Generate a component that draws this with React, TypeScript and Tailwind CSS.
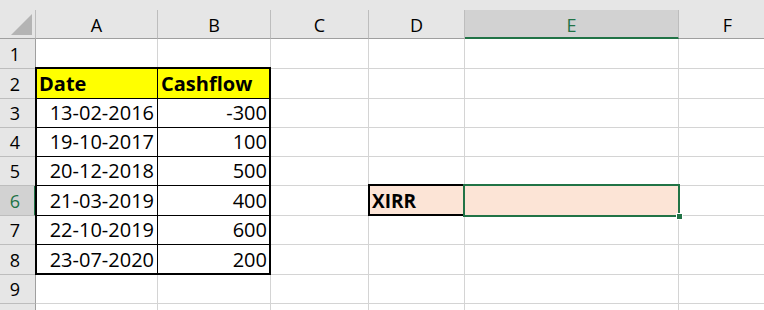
import React from "react";

const GRID =
  "grid grid-cols-[36px_122px_113px_98px_96px_214px_98px] grid-rows-[10px_29px_30px_30px_29px_29px_29px_30px_29px_30px_29px_30px]";

type Row = {
  n: number;
  a?: string;
  b?: string;
  d?: string;
};

const rows: Row[] = [
  { n: 1 },
  { n: 2, a: "Date", b: "Cashflow" },
  { n: 3, a: "13-02-2016", b: "-300" },
  { n: 4, a: "19-10-2017", b: "100" },
  { n: 5, a: "20-12-2018", b: "500" },
  { n: 6, a: "21-03-2019", b: "400", d: "XIRR" },
  { n: 7, a: "22-10-2019", b: "600" },
  { n: 8, a: "23-07-2020", b: "200" },
  { n: 9 },
  { n: 10 },
];

const letters = ["A", "B", "C", "D", "E", "F"];

export default function App() {
  return (
    <div className="w-[764px] h-[310px] overflow-hidden bg-white font-['Open_Sans',sans-serif] text-black">
      <div className="relative w-[777px]">
        <div className={GRID}>
          {/* corner */}
          <div className="row-span-2 bg-[#e6e6e6] flex flex-col">
            <div className="h-[10px]" />
            <div className="flex-1 border-r border-b border-r-[#bdbdbd] border-b-[#9f9f9f]">
              <svg width="35" height="28" viewBox="0 0 35 28" className="block">
                <polygon points="32,4 32,25 11,25" fill="#b4b4b4" />
              </svg>
            </div>
          </div>
          {letters.map((l) => (
            <div key={"s" + l} className="bg-[#e6e6e6]" />
          ))}
          {letters.map((l) =>
            l === "E" ? (
              <div
                key={l}
                className="bg-[#d2d2d2] border-r border-r-[#bdbdbd] border-b-2 border-b-[#217346] flex items-center justify-center text-[18px] leading-[18px] text-[#217346] pt-[2px]"
              >
                {l}
              </div>
            ) : (
              <div
                key={l}
                className="bg-[#e6e6e6] border-r border-b border-r-[#bdbdbd] border-b-[#9f9f9f] flex items-center justify-center text-[18px] leading-[18px] pt-[2px]"
              >
                {l}
              </div>
            )
          )}
          {rows.map((r) => {
            const inTable = r.n >= 2 && r.n <= 8;
            const innerBottom = r.n >= 2 && r.n <= 7;
            const isHead = r.n === 2;
            return (
              <React.Fragment key={r.n}>
                {r.n === 6 ? (
                  <div className="bg-[#d2d2d2] border-r-2 border-r-[#217346] border-b border-b-[#bdbdbd] flex items-center justify-center pr-[4px] text-[18px] leading-[18px] text-[#217346]">
                    {r.n}
                  </div>
                ) : (
                  <div className="bg-[#e6e6e6] border-r border-b border-r-[#9f9f9f] border-b-[#bdbdbd] flex items-center justify-center pr-[5px] text-[18px] leading-[18px]">
                    {r.n < 10 ? r.n : null}
                  </div>
                )}
                {/* A */}
                <div
                  className={
                    "border-r border-b flex items-center text-[20px] leading-[20px] " +
                    (inTable ? "border-r-black " : "border-r-[#d4d4d4] ") +
                    (innerBottom ? "border-b-black " : "border-b-[#d4d4d4] ") +
                    (isHead
                      ? "bg-[#ffff00] font-bold justify-start pl-[3px] text-[19px]"
                      : "justify-end pr-[3px]")
                  }
                >
                  {r.a}
                </div>
                {/* B */}
                <div
                  className={
                    "border-r border-b border-r-[#d4d4d4] flex items-center text-[20px] leading-[20px] " +
                    (innerBottom ? "border-b-black " : "border-b-[#d4d4d4] ") +
                    (isHead
                      ? "bg-[#ffff00] font-bold justify-start pl-[3px] text-[19px]"
                      : "justify-end pr-[3px]")
                  }
                >
                  {r.b}
                </div>
                {/* C */}
                <div className="border-r border-b border-[#d4d4d4]" />
                {/* D */}
                <div
                  className={
                    "border-r border-b border-[#d4d4d4] flex items-center pl-[3px] text-[19px] leading-[20px] font-bold " +
                    (r.d ? "bg-[#fce4d6]" : "")
                  }
                >
                  {r.d}
                </div>
                {/* E */}
                <div
                  className={
                    "border-r border-b border-[#d4d4d4] " +
                    (r.n === 6 ? "bg-[#fce4d6]" : "")
                  }
                />
                {/* F */}
                <div className="border-r border-b border-[#d4d4d4]" />
              </React.Fragment>
            );
          })}
        </div>

        {/* overlays: borders and selection */}
        <div className={GRID + " absolute inset-0 pointer-events-none"}>
          <div className="col-start-2 col-end-4 row-start-4 row-end-11 border-2 border-black -ml-px -mt-[2px]" />
          <div className="col-start-5 row-start-8 border-2 border-black -ml-px -mt-[2px]" />
          <div className="col-start-6 row-start-8 relative border-2 border-[#217346] -ml-[2px] -mt-[2px] -mr-px -mb-px">
            <div className="absolute -right-[5px] -bottom-[5px] w-[7px] h-[7px] bg-[#217346] border border-white" />
          </div>
        </div>
      </div>
    </div>
  );
}
